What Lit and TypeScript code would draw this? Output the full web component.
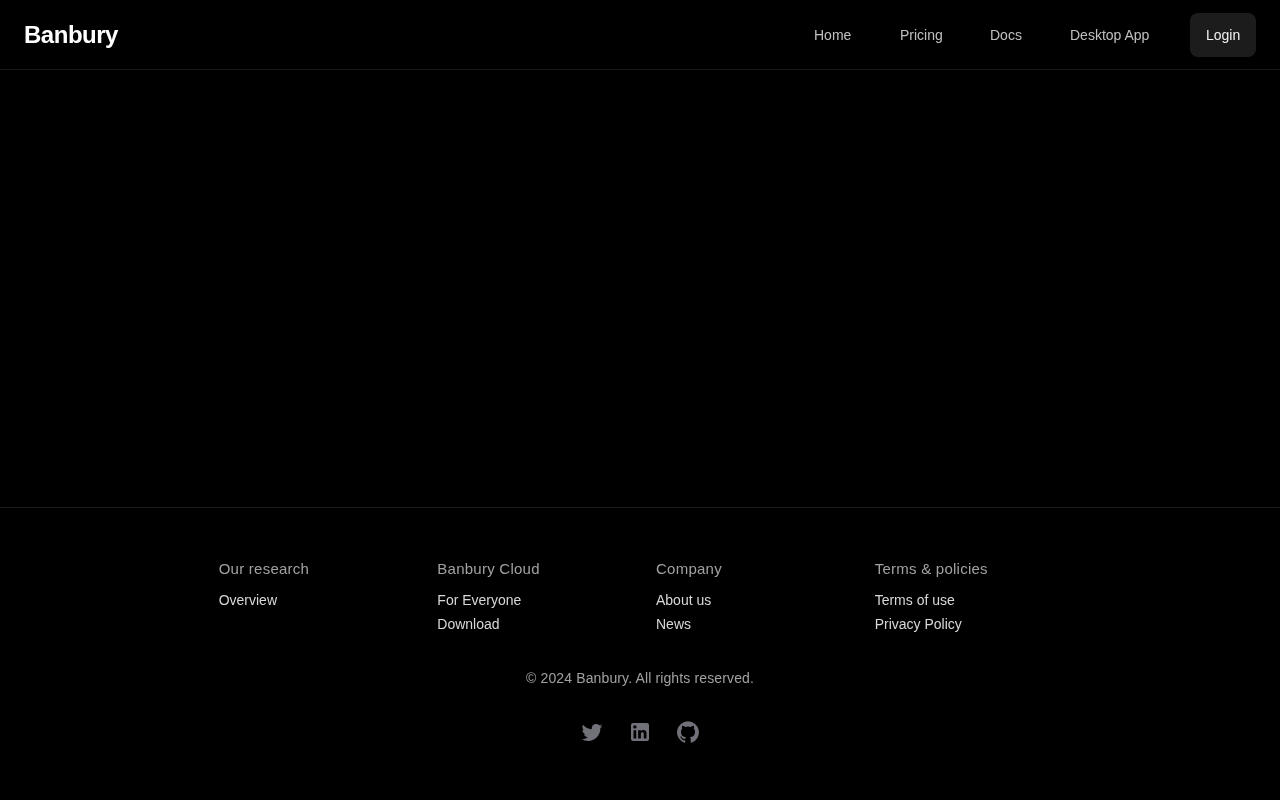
import { LitElement, html, css } from "lit";
import { customElement } from "lit/decorators.js";

const columns = [
  { title: "Our research", links: ["Overview"] },
  { title: "Banbury Cloud", links: ["For Everyone", "Download"] },
  { title: "Company", links: ["About us", "News"] },
  { title: "Terms & policies", links: ["Terms of use", "Privacy Policy"] },
];

@customElement("app-root")
export class AppRoot extends LitElement {
  static styles = css`
    :host {
      display: block;
      min-height: 800px;
      background: #000;
      font-family: "Liberation Sans", Arial, sans-serif;
      color: #ededed;
    }
    a { color: inherit; text-decoration: none; }
    .nav {
      height: 69px;
      box-sizing: content-box;
      border-bottom: 1px solid #1a1a1a;
      display: flex;
      align-items: center;
      justify-content: space-between;
      padding: 0 24px;
    }
    .brand, .links a, .login, .footer-inner { will-change: transform; }
    .brand { font-size: 24px; font-weight: 700; color: #fff; letter-spacing: -0.48px; }
    .links { display: flex; align-items: center; }
    .links a { font-size: 14px; color: #c0c0c0; padding: 0 24px; line-height: 20px; }
    .login {
      margin-left: 16px;
      height: 44px;
      padding: 0 16px;
      background: #1c1c1c;
      border-radius: 8px;
      color: #f2f2f2;
      font-size: 14px;
      display: flex;
      align-items: center;
    }
    .main { height: 437px; }
    .footer { border-top: 1px solid #1a1a1a; padding-top: 49px; }
    .grid {
      width: 842.67px;
      margin: 0 auto;
      display: grid;
      grid-template-columns: repeat(4, 1fr);
      gap: 32px;
    }
    .col h4 {
      margin: 0 0 7px;
      font-size: 15px;
      font-weight: 400;
      line-height: 24px;
      letter-spacing: 0.25px;
      color: #a1a1a1;
    }
    .col a { display: block; font-size: 14px; line-height: 24px; color: #d8d8d8; }
    .copy {
      margin-top: 30px;
      text-align: center;
      font-size: 14px;
      line-height: 24px;
      letter-spacing: 0.13px;
      color: #a1a1a1;
    }
    .social { display: flex; justify-content: center; align-items: center; gap: 24px; margin-top: 30px; height: 24px; }
    .social svg { width: 24px; height: 24px; fill: #71717a; display: block; }
    .social svg.gh { width: 22px; height: 22px; margin: 0 1px; }
  `;

  render() {
    return html`
      <header class="nav">
        <a class="brand" href="#">Banbury</a>
        <nav class="links">
          <a href="#">Home</a><a href="#">Pricing</a><a href="#">Docs</a><a href="#">Desktop App</a>
          <div class="login">Login</div>
        </nav>
      </header>
      <main class="main"></main>
      <footer class="footer">
        <div class="footer-inner">
          <div class="grid">
            ${columns.map(
              (c) => html`<div class="col">
                <h4>${c.title}</h4>
                ${c.links.map((l) => html`<a href="#">${l}</a>`)}
              </div>`
            )}
          </div>
          <div class="copy">© 2024 Banbury. All rights reserved.</div>
          <div class="social">
            <svg viewBox="0 0 24 24"><path d="M22.46,6C21.69,6.35 20.86,6.58 20,6.69C20.88,6.16 21.56,5.32 21.88,4.31C21.05,4.81 20.13,5.16 19.16,5.36C18.37,4.5 17.26,4 16,4C13.65,4 11.73,5.92 11.73,8.29C11.73,8.63 11.77,8.96 11.84,9.27C8.28,9.09 5.11,7.38 3,4.79C2.63,5.42 2.42,6.16 2.42,6.94C2.42,8.43 3.17,9.75 4.33,10.5C3.62,10.5 2.96,10.3 2.38,10C2.38,10 2.38,10 2.38,10.03C2.38,12.11 3.86,13.85 5.82,14.24C5.46,14.34 5.08,14.39 4.69,14.39C4.42,14.39 4.15,14.36 3.89,14.31C4.43,16 6,17.26 7.89,17.29C6.43,18.45 4.58,19.13 2.56,19.13C2.22,19.13 1.88,19.11 1.54,19.07C3.44,20.29 5.7,21 8.12,21C16,21 20.33,14.46 20.33,8.79C20.33,8.6 20.33,8.42 20.32,8.23C21.16,7.63 21.88,6.87 22.46,6Z"/></svg>
            <svg viewBox="0 0 24 24"><path d="M19 3A2 2 0 0 1 21 5V19A2 2 0 0 1 19 21H5A2 2 0 0 1 3 19V5A2 2 0 0 1 5 3H19M18.5 18.5V13.2A3.26 3.26 0 0 0 15.24 9.94C14.39 9.94 13.4 10.46 12.92 11.24V10.13H10.13V18.5H12.92V13.57C12.92 12.8 13.54 12.17 14.31 12.17A1.4 1.4 0 0 1 15.71 13.57V18.5H18.5M6.88 8.56A1.68 1.68 0 0 0 8.56 6.88C8.56 5.95 7.81 5.19 6.88 5.19A1.69 1.69 0 0 0 5.19 6.88C5.19 7.81 5.95 8.56 6.88 8.56M8.27 18.5V10.13H5.5V18.5H8.27Z"/></svg>
            <svg class="gh" viewBox="0 0 24 24"><path d="M12 .3a12 12 0 0 0-3.8 23.38c.6.12.83-.26.83-.57l-.01-2.04c-3.34.72-4.04-1.61-4.04-1.61-.55-1.39-1.33-1.76-1.33-1.76-1.09-.74.08-.73.08-.73 1.2.09 1.84 1.24 1.84 1.24 1.07 1.83 2.81 1.3 3.5 1 .1-.78.42-1.31.76-1.61-2.67-.3-5.47-1.33-5.47-5.93 0-1.31.47-2.38 1.24-3.22-.14-.3-.54-1.52.1-3.18 0 0 1.01-.32 3.3 1.23a11.5 11.5 0 0 1 6 0c2.28-1.55 3.29-1.23 3.29-1.23.64 1.66.24 2.88.12 3.18a4.65 4.65 0 0 1 1.23 3.22c0 4.61-2.8 5.63-5.48 5.92.42.36.81 1.1.81 2.22l-.01 3.29c0 .31.2.69.82.57A12 12 0 0 0 12 .3"/></svg>
          </div>
        </div>
      </footer>
    `;
  }
}
